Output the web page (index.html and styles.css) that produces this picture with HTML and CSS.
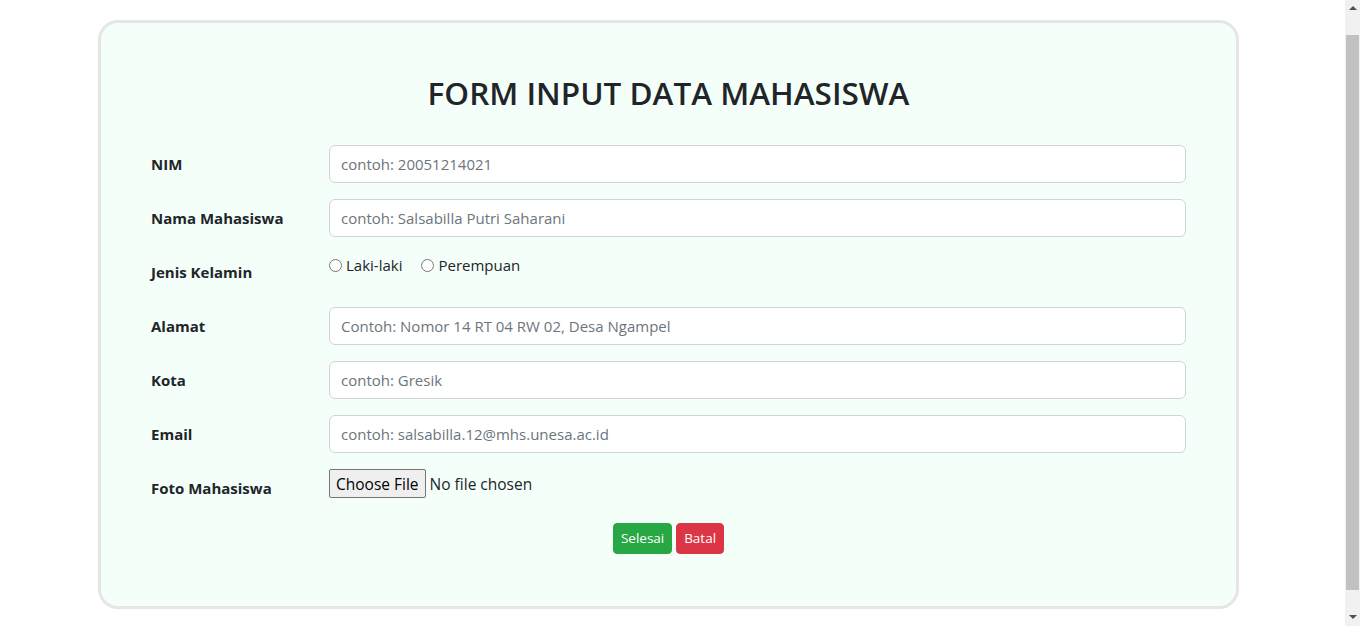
FILE: index.html
```html
<!DOCTYPE html>
<html lang="id">
<head>
<meta charset="utf-8">
<title>Form Input Data Mahasiswa</title>
<link rel="stylesheet" href="styles.css">
</head>
<body>
<div class="card">
  <h2 class="title">FORM INPUT DATA MAHASISWA</h2>
  <form class="form">
    <div class="row">
      <label class="label" for="nim">NIM</label>
      <input class="control" id="nim" type="text" placeholder="contoh: 20051214021">
    </div>
    <div class="row">
      <label class="label" for="nama">Nama Mahasiswa</label>
      <input class="control" id="nama" type="text" placeholder="contoh: Salsabilla Putri Saharani">
    </div>
    <div class="row">
      <span class="label">Jenis Kelamin</span>
      <div class="radios">
        <label class="radio"><input type="radio" name="jk"> Laki-laki</label>
        <label class="radio"><input type="radio" name="jk"> Perempuan</label>
      </div>
    </div>
    <div class="row">
      <label class="label" for="alamat">Alamat</label>
      <input class="control" id="alamat" type="text" placeholder="Contoh: Nomor 14 RT 04 RW 02, Desa Ngampel">
    </div>
    <div class="row">
      <label class="label" for="kota">Kota</label>
      <input class="control" id="kota" type="text" placeholder="contoh: Gresik">
    </div>
    <div class="row">
      <label class="label" for="email">Email</label>
      <input class="control" id="email" type="text" placeholder="contoh: salsabilla.12@mhs.unesa.ac.id">
    </div>
    <div class="row">
      <label class="label" for="foto">Foto Mahasiswa</label>
      <div><input class="file" id="foto" type="file"></div>
    </div>
    <div class="actions">
      <button type="submit" class="btn btn-green">Selesai</button>
      <button type="reset" class="btn btn-red">Batal</button>
    </div>
  </form>
</div>
<div class="scrollbar" aria-hidden="true">
  <span class="arrow arrow-up"></span>
  <span class="thumb"></span>
  <span class="arrow arrow-down"></span>
</div>
</body>
</html>
```

FILE: styles.css
```css
html, body {
  margin: 0;
  padding: 0;
}
body {
  font-family: "Open Sans", "Noto Sans", sans-serif;
  font-size: 15px;
  line-height: 24px;
  color: #212529;
  background: #ffffff;
  padding: 20px 0 40px 98px;
}
.card {
  background: #f5fffa;
  border: 3px solid #e6e6e6;
  border-radius: 20px;
  padding: 0 50px 52px 50px;
  box-sizing: border-box;
  width: 1141px;
}
.title {
  margin: 0;
  padding: 50px 0 32px;
  text-align: center;
  font-size: 31.5px;
  line-height: 40px;
  font-weight: 600;
}
.form {
  margin: 0;
}
.row {
  display: grid;
  grid-template-columns: 178px 1fr;
  margin-bottom: 16px;
  min-height: 38px;
}
.label {
  font-weight: 700;
  padding: 7px 0;
  line-height: 24px;
}
.control {
  display: block;
  height: 38px;
  box-sizing: border-box;
  padding: 6px 11px;
  font: inherit;
  color: #212529;
  background: #fff;
  border: 1px solid #ced4da;
  border-radius: 6px;
}
.control::placeholder {
  color: #6c757d;
}
.radios {
  display: flex;
  gap: 19px;
  align-items: flex-start;
}
.radio {
  display: flex;
  align-items: center;
  gap: 4px;
}
.radio input {
  margin: 0;
  width: 13px;
  height: 13px;
}
.file {
  font: inherit;
  font-size: 15.5px;
  margin: 0;
  color: #212529;
}
.file::file-selector-button {
  font: inherit;
  height: 29px;
  padding: 0 6px;
  margin-right: 4px;
  border: 1px solid #767676;
  border-radius: 2px;
  background: #efefef;
  color: #000;
}
.actions {
  text-align: center;
}
.btn {
  font: inherit;
  font-size: 13.5px;
  font-weight: 500;
  line-height: 21px;
  padding: 4px 7px;
  border-radius: 4px;
  color: #fff;
  cursor: pointer;
}
.btn-green {
  background: #28a745;
  border: 1px solid #28a745;
}
.btn-red {
  background: #dc3545;
  border: 1px solid #dc3545;
}
.scrollbar {
  position: fixed;
  top: 0;
  right: 0;
  width: 15px;
  height: 100vh;
  background: #f1f1f1;
  display: flex;
  flex-direction: column;
  align-items: center;
}
.arrow {
  width: 0;
  height: 0;
  border-left: 4px solid transparent;
  border-right: 4px solid transparent;
}
.arrow-up {
  margin-top: 6px;
  border-bottom: 4px solid #505050;
}
.arrow-down {
  margin-top: auto;
  margin-bottom: 7px;
  border-top: 4px solid #505050;
}
.thumb {
  width: 13px;
  height: 555px;
  margin-top: 25px;
  background: #c1c1c1;
}
```
